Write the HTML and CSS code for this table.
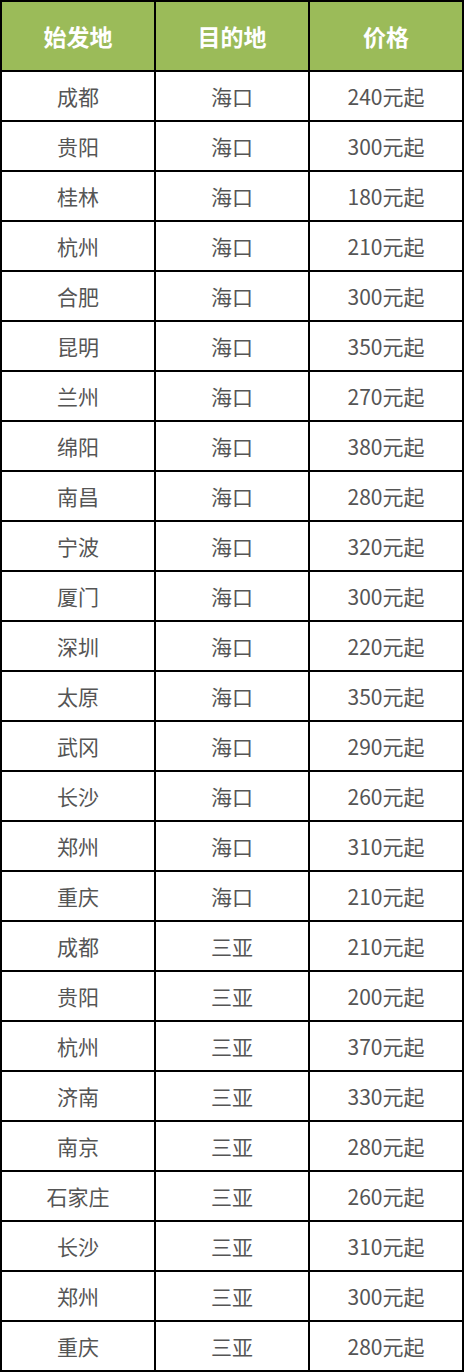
FILE: index.html
```html
<!DOCTYPE html>
<html lang="zh">
<head>
<meta charset="utf-8">
<title>航线价格</title>
<link rel="stylesheet" href="styles.css">
</head>
<body>
<table class="price-table">
  <thead>
    <tr><th>始发地</th><th>目的地</th><th>价格</th></tr>
  </thead>
  <tbody>
    <tr><td>成都</td><td>海口</td><td>240元起</td></tr>
    <tr><td>贵阳</td><td>海口</td><td>300元起</td></tr>
    <tr><td>桂林</td><td>海口</td><td>180元起</td></tr>
    <tr><td>杭州</td><td>海口</td><td>210元起</td></tr>
    <tr><td>合肥</td><td>海口</td><td>300元起</td></tr>
    <tr><td>昆明</td><td>海口</td><td>350元起</td></tr>
    <tr><td>兰州</td><td>海口</td><td>270元起</td></tr>
    <tr><td>绵阳</td><td>海口</td><td>380元起</td></tr>
    <tr><td>南昌</td><td>海口</td><td>280元起</td></tr>
    <tr><td>宁波</td><td>海口</td><td>320元起</td></tr>
    <tr><td>厦门</td><td>海口</td><td>300元起</td></tr>
    <tr><td>深圳</td><td>海口</td><td>220元起</td></tr>
    <tr><td>太原</td><td>海口</td><td>350元起</td></tr>
    <tr><td>武冈</td><td>海口</td><td>290元起</td></tr>
    <tr><td>长沙</td><td>海口</td><td>260元起</td></tr>
    <tr><td>郑州</td><td>海口</td><td>310元起</td></tr>
    <tr><td>重庆</td><td>海口</td><td>210元起</td></tr>
    <tr><td>成都</td><td>三亚</td><td>210元起</td></tr>
    <tr><td>贵阳</td><td>三亚</td><td>200元起</td></tr>
    <tr><td>杭州</td><td>三亚</td><td>370元起</td></tr>
    <tr><td>济南</td><td>三亚</td><td>330元起</td></tr>
    <tr><td>南京</td><td>三亚</td><td>280元起</td></tr>
    <tr><td>石家庄</td><td>三亚</td><td>260元起</td></tr>
    <tr><td>长沙</td><td>三亚</td><td>310元起</td></tr>
    <tr><td>郑州</td><td>三亚</td><td>300元起</td></tr>
    <tr><td>重庆</td><td>三亚</td><td>280元起</td></tr>
  </tbody>
</table>
</body>
</html>
```
FILE: styles.css
```css
html, body {
  margin: 0;
  padding: 0;
  background: #ffffff;
}
.price-table {
  width: 464px;
  border-collapse: collapse;
  table-layout: fixed;
  font-family: "Noto Sans CJK SC", "Noto Sans", sans-serif;
}
.price-table th,
.price-table td {
  border: 2px solid #000;
  padding: 0;
  text-align: center;
  vertical-align: middle;
}
.price-table th {
  background: #9bbb59;
  color: #ffffff;
  font-weight: 700;
  font-size: 23px;
  height: 68px;
}
.price-table td {
  color: #555555;
  font-size: 21px;
  height: 48px;
}
```
